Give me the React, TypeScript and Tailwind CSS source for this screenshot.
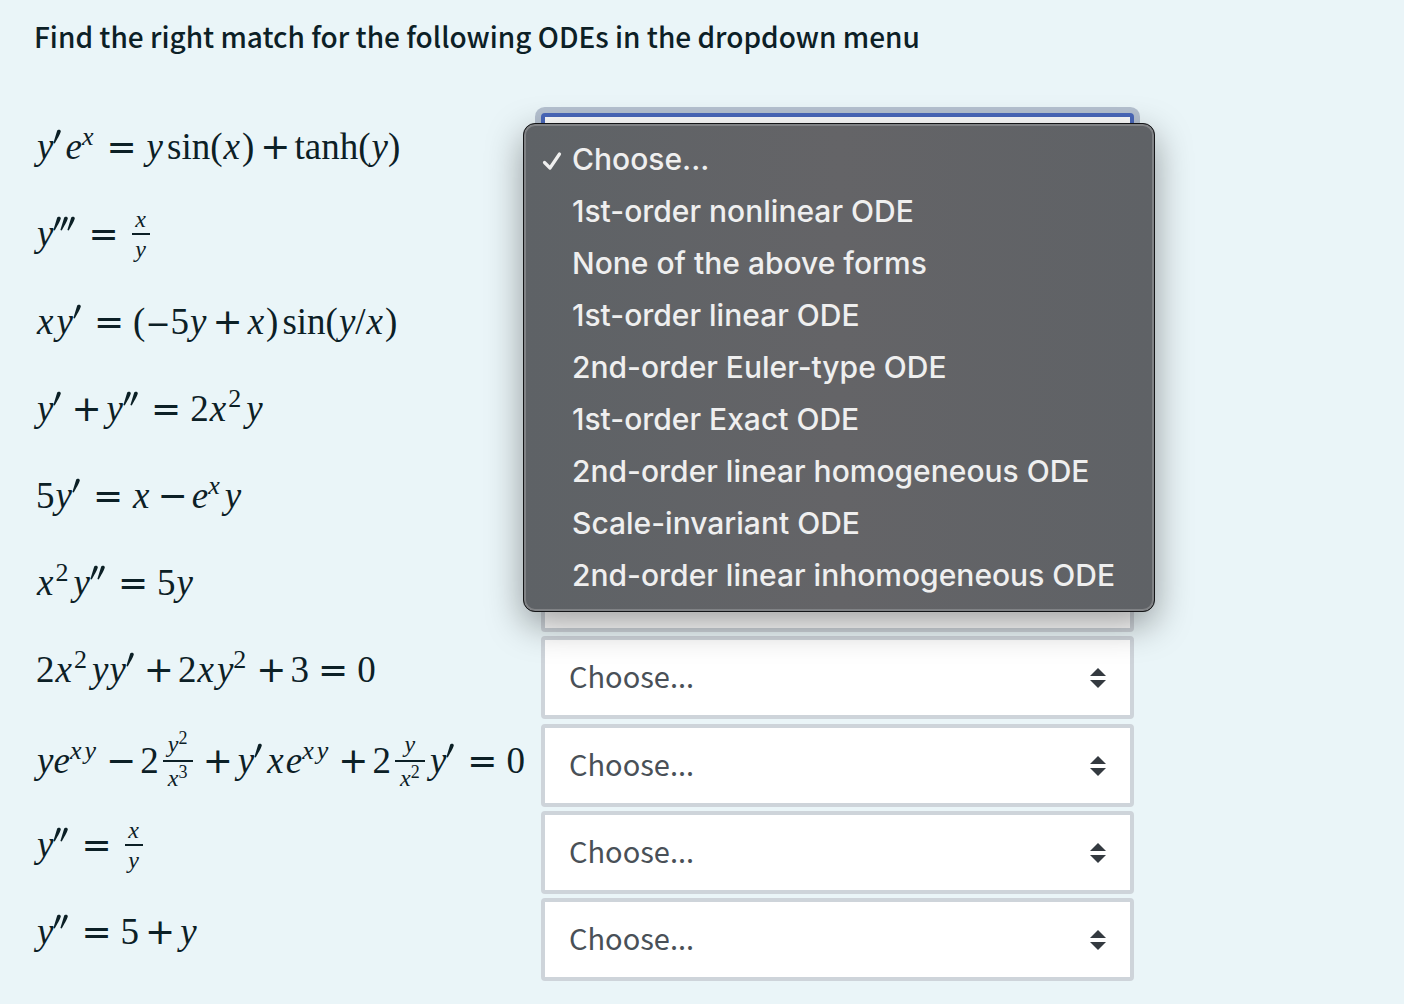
import React from "react";

type Kids = { children: React.ReactNode };

/* Math building blocks */
const Y = () => <i className="ml-px">y</i>;
const X = () => <i className="mr-0.5 ml-px">x</i>;
const E = () => <i>e</i>;
const Rel = () => <span className="mx-[9px] font-['DejaVu_Sans',sans-serif] text-[36px]">=</span>;
const Op = ({ children }: Kids) => (
  <span className="mr-1 ml-1.5 font-['DejaVu_Sans',sans-serif] text-[36px]">{children}</span>
);
const Sup = ({ children }: Kids) => (
  <span className="relative -top-3.5 mr-1 text-[26px]">{children}</span>
);
const SupXY = () => (
  <span className="relative -top-3.5 mr-1 flex gap-[3px] text-[26px]">
    <i>x</i>
    <i>y</i>
  </span>
);
const Prime = ({ n = 1 }: { n?: number }) => (
  <span className="mt-1 mr-1 inline-flex gap-[3px] self-start" role="img" aria-label={"prime ".repeat(n).trim()}>
    {Array.from({ length: n }, (_, i) => (
      <svg key={i} className={i === 0 ? "h-4 w-2" : "-ml-1 h-4 w-2"} viewBox="0 0 8 16" fill="currentColor">
        <path d="M4.2 1.6C4.7.2 8 .2 7.8 2.4 7.3 4.800 3.6 11 1.800 14.400L.4 14Z" />
      </svg>
    ))}
  </span>
);
const Frac = ({ top, bottom, wide }: { top: React.ReactNode; bottom: React.ReactNode; wide?: boolean }) => (
  <span
    className={
      wide
        ? "mx-1 inline-flex w-[30px] flex-col items-center self-center text-[24px] leading-8"
        : "mx-1 inline-flex w-[18px] flex-col items-center self-center text-[24px] leading-7"
    }
  >
    <span className="flex">{top}</span>
    <span className="h-0.5 w-full bg-current" />
    <span className="flex">{bottom}</span>
  </span>
);
const Small = ({ children }: Kids) => <span className="relative -top-1.5 text-[18px]">{children}</span>;

type Equation = { name: string; body: React.ReactNode; roomy?: boolean; low?: boolean };

const equations: Equation[] = [
  {
    name: "Equation 1",
    body: (
      <>
        <Y /><Prime /><E /><Sup><i>x</i></Sup><Rel /><Y /><span className="ml-1">sin(</span><X />)<Op>+</Op>
        <span>tanh(</span><Y />)
      </>
    ),
  },
  {
    name: "Equation 2",
    roomy: true,
    body: <><Y /><Prime n={3} /><Rel /><Frac top={<i>x</i>} bottom={<i>y</i>} /></>,
  },
  {
    name: "Equation 3",
    body: (
      <>
        <X /><Y /><Prime /><Rel />(<span className="font-['DejaVu_Sans',sans-serif] text-[30px]">−</span>5<Y /><Op>+</Op><X />)
        <span className="ml-1">sin(</span><Y />/<X />)
      </>
    ),
  },
  { name: "Equation 4", body: <><Y /><Prime /><Op>+</Op><Y /><Prime n={2} /><Rel />2<X /><Sup>2</Sup><Y /></> },
  { name: "Equation 5", body: <>5<Y /><Prime /><Rel /><X /><Op>−</Op><E /><Sup><i>x</i></Sup><Y /></> },
  { name: "Equation 6", body: <><X /><Sup>2</Sup><Y /><Prime n={2} /><Rel />5<Y /></> },
  {
    name: "Equation 7",
    roomy: true,
    body: <>2<X /><Sup>2</Sup><Y /><Y /><Prime /><Op>+</Op>2<X /><Y /><Sup>2</Sup><Op>+</Op>3<Rel />0</>,
  },
  {
    name: "Equation 8",
    low: true,
    body: (
      <>
        <Y /><E /><SupXY /><Op>−</Op>2
        <Frac wide top={<><i>y</i><Small>2</Small></>} bottom={<><i>x</i><Small>3</Small></>} />
        <Op>+</Op><Y /><Prime /><X /><E /><SupXY /><Op>+</Op>2
        <Frac wide top={<i>y</i>} bottom={<><i>x</i><Small>2</Small></>} />
        <Y /><Prime /><Rel />0
      </>
    ),
  },
  { name: "Equation 9", body: <><Y /><Prime n={2} /><Rel /><Frac top={<i>x</i>} bottom={<i>y</i>} /></> },
  { name: "Equation 10", body: <><Y /><Prime n={2} /><Rel />5<Op>+</Op><Y /></> },
];

const choices = [
  "Choose...",
  "1st-order nonlinear ODE",
  "None of the above forms",
  "1st-order linear ODE",
  "2nd-order Euler-type ODE",
  "1st-order Exact ODE",
  "2nd-order linear homogeneous ODE",
  "Scale-invariant ODE",
  "2nd-order linear inhomogeneous ODE",
];

function Menu() {
  return (
    <ul
      role="listbox"
      aria-label="Answer choices"
      className="absolute top-[10px] -right-[21px] -left-[18px] z-10 rounded-xl border border-[#141517] bg-[#626467] bg-linear-to-r from-[#5e6266] via-[#646467] to-[#5f6266] pt-[9px] pb-2.5 font-[Inter,sans-serif] text-[30px] font-medium text-[#efefef] shadow-[inset_0_0_0_2px_#808285,0_12px_36px_rgba(0,0,0,0.38)]"
    >
      {choices.map((choice, i) => (
        <li key={choice} role="option" aria-selected={i === 0}>
          <button type="button" className="flex h-13 w-full items-center pl-[18px] text-left whitespace-nowrap">
            <span className="w-[30px] shrink-0">
              {i === 0 && (
                <svg className="mt-1 h-5 w-5" viewBox="0 0 20 20" fill="none" stroke="currentColor" strokeWidth="3.200" strokeLinecap="round" strokeLinejoin="round">
                  <path d="M2.500 11.500 8 17 17.500 3" />
                </svg>
              )}
            </span>
            {choice}
          </button>
        </li>
      ))}
    </ul>
  );
}

function AnswerSelect({ label, open }: { label: string; open?: boolean }) {
  return (
    <div className="relative">
      <select
        aria-label={label}
        defaultValue="Choose..."
        className={
          open
            ? "block h-[83px] w-full appearance-none rounded-sm border-4 border-[#4a68bb] bg-white pb-1 pl-6 text-[29px] text-[#495057] shadow-[0_0_0_6px_#b5c1d0] outline-none"
            : "block h-[83px] w-full appearance-none rounded-sm border-4 border-[#ced4da] bg-white pb-1 pl-6 text-[29px] text-[#495057] outline-none"
        }
      >
        {choices.map((c) => (
          <option key={c}>{c}</option>
        ))}
      </select>
      <svg className="pointer-events-none absolute top-8 right-7 h-5 w-4" viewBox="0 0 16 20" fill="#343a40">
        <path d="M0 8 8 0l8 8ZM0 12h16l-8 8Z" />
      </svg>
      {open && <Menu />}
    </div>
  );
}

export default function App() {
  return (
    <main className="min-h-screen bg-[#eaf5f8] px-[34px] pt-[14px] pb-4 font-['Noto_Sans_CJK_SC',sans-serif] text-[#0c2026]">
      <h1 className="text-[28px] leading-11 font-medium">Find the right match for the following ODEs in the dropdown menu</h1>
      <table className="mt-[53px] w-full max-w-[1100px] table-fixed border-collapse">
        <tbody>
          {equations.map((eq, i) => (
            <tr key={eq.name}>
              <td className={eq.low ? "w-[507px] p-0 pb-2.5 pl-0.5 align-middle" : "w-[507px] p-0 pb-4 pl-0.5 align-middle"}>
                <div className="flex h-11 items-baseline font-['Liberation_Serif',serif] text-[37px] leading-11 whitespace-nowrap">
                  {eq.body}
                </div>
              </td>
              <td className={eq.roomy ? "p-0 pt-0.5 pb-[3px]" : "p-0 pt-0.5 pb-0.5"}>
                <AnswerSelect label={eq.name} open={i === 0} />
              </td>
            </tr>
          ))}
        </tbody>
      </table>
    </main>
  );
}
